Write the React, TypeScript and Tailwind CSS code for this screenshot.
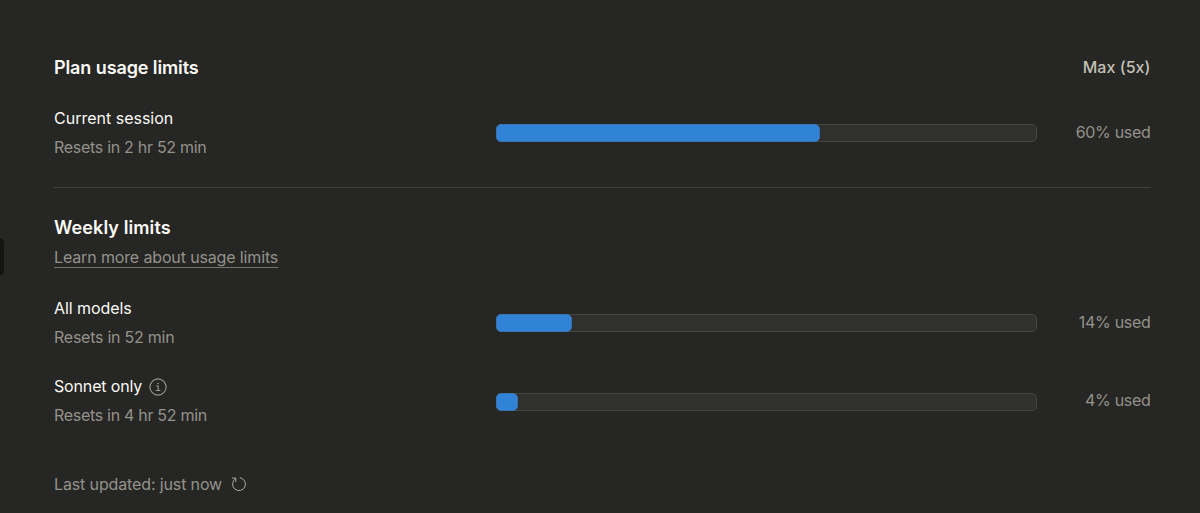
import React from "react";

type UsageRowProps = {
  title: string;
  titleClass: string;
  reset: string;
  resetClass: string;
  percent: number;
  barClass?: string;
  info?: boolean;
};

const InfoIcon: React.FC = () => (
  <svg
    width="18"
    height="18"
    viewBox="0 0 18 18"
    fill="none"
    stroke="currentColor"
    className="mt-px text-[#9a9892]"
  >
    <circle cx="9" cy="9" r="8.1" strokeWidth="1.1" />
    <path d="M7.2 8h2v4.4M6.7 12.5h4.7" strokeWidth="1.1" />
    <circle cx="9" cy="5.5" r="0.8" fill="currentColor" stroke="none" />
  </svg>
);

const RefreshIcon: React.FC = () => (
  <svg
    width="16"
    height="16"
    viewBox="0 0 16 16"
    fill="none"
    stroke="currentColor"
    strokeWidth="1"
    strokeLinecap="round"
    strokeLinejoin="round"
    className="text-[#aaa8a0]"
  >
    <path d="M9.2 1.7A6.5 6.5 0 1 1 4.2 2.8" />
    <path d="M1.3 2h3.5v3.6" />
  </svg>
);

const UsageRow: React.FC<UsageRowProps> = ({
  title,
  titleClass,
  reset,
  resetClass,
  percent,
  barClass = "mt-px",
  info,
}) => (
  <div className="flex items-center">
    <div className="w-[441.5px] flex flex-col gap-px leading-7">
      <div className="flex items-center gap-[7px] text-[#faf9f5]">
        <span className={titleClass}>{title}</span>
        {info && <InfoIcon />}
      </div>
      <p className={`text-[#94928b] ${resetClass}`}>{reset}</p>
    </div>
    <div
      className={`w-[541.5px] h-[18px] rounded-[5px] border border-[#444441] bg-[#30302e] ${barClass}`}
    >
      <div
        className="h-[18px] -mt-px -ml-px rounded-[5px] border border-[#3a74ad] bg-[#3183d8]"
        style={{ width: `calc(${percent}% + 1px)` }}
      />
    </div>
    <span className="flex-1 pb-px text-right text-[#94928b] tracking-[-0.3px]">
      {percent}% used
    </span>
  </div>
);

const App: React.FC = () => {
  return (
    <main className="relative w-full h-[513px] overflow-hidden bg-[#262624] pl-[54px] pr-[49.5px] pt-[53px] font-['Inter',sans-serif] text-[16px] leading-7 whitespace-nowrap">
      <div className="absolute -left-2 top-[238px] w-3 h-[38px] rounded-[5px] bg-[#141413]" />

      <div className="flex items-start justify-between">
        <h2 className="pt-px text-[18px] leading-7 font-semibold text-[#faf9f5] tracking-[-0.1px]">
          Plan usage limits
        </h2>
        <span className="font-medium text-[#c2c0b6] tracking-[0.05px]">
          Max (5x)
        </span>
      </div>

      <div className="mt-[22px]">
        <UsageRow
          title="Current session"
          titleClass=""
          reset="Resets in 2 hr 52 min"
          resetClass="tracking-[-0.29px]"
          percent={60}
        />
      </div>

      <hr className="mt-[26px] border-[#40403d]" />

      <h2 className="mt-[26px] text-[18px] leading-7 font-semibold text-[#faf9f5] tracking-[0.1px]">
        Weekly limits
      </h2>
      <div className="mt-px flex">
        <a
          href="#"
          className="text-[#94928b] underline decoration-[#73726c] decoration-1 underline-offset-4 tracking-[-0.14px]"
        >
          Learn more about usage limits
        </a>
      </div>

      <div className="mt-[23px] flex flex-col gap-[21px]">
        <UsageRow
          title="All models"
          titleClass="tracking-[-0.08px]"
          reset="Resets in 52 min"
          resetClass="tracking-[-0.25px]"
          percent={14}
        />
        <UsageRow
          title="Sonnet only"
          titleClass="tracking-[-0.15px]"
          reset="Resets in 4 hr 52 min"
          resetClass="tracking-[-0.3px]"
          percent={4}
          barClass="mt-[2px]"
          info
        />
      </div>

      <div className="mt-[41px] flex items-center gap-[9px] text-[#94928b]">
        <span className="tracking-[-0.13px]">Last updated: just now</span>
        <button aria-label="Refresh">
          <RefreshIcon />
        </button>
      </div>
    </main>
  );
};

export default App;
